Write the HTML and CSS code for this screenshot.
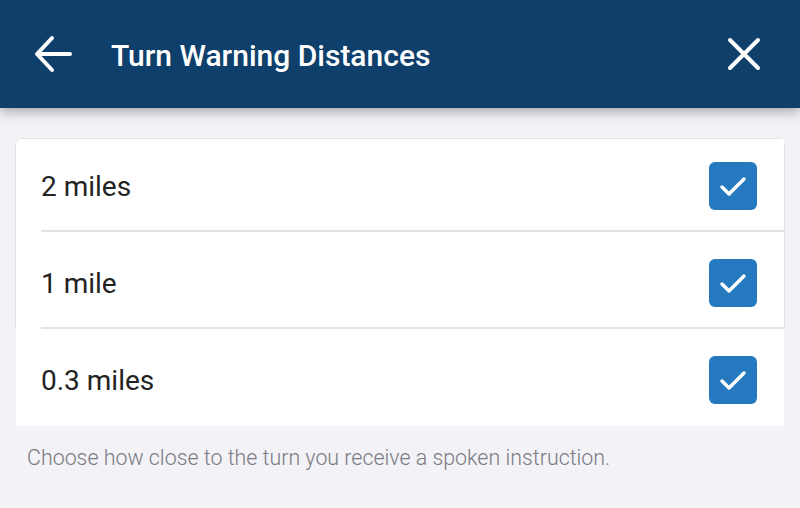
FILE: index.html
```html
<!DOCTYPE html>
<html>
<head>
<meta charset="utf-8">
<link rel="stylesheet" href="styles.css">
</head>
<body>
<header class="topbar">
  <svg class="icon back" width="40" height="40" viewBox="0 0 40 40">
    <path d="M36 20H4M18 4L3 20L18 36" fill="none" stroke="#fff" stroke-width="4" stroke-linecap="round" stroke-linejoin="round"/>
  </svg>
  <h1 class="title">Turn Warning Distances</h1>
  <svg class="icon close" width="40" height="40" viewBox="0 0 40 40">
    <path d="M6 6L34 34M34 6L6 34" fill="none" stroke="#fff" stroke-width="4" stroke-linecap="round"/>
  </svg>
</header>
<main class="content">
  <div class="group">
    <div class="row row-first">
      <span class="label">2 miles</span>
      <span class="check"><svg width="48" height="48" viewBox="0 0 48 48"><path d="M13 25L20 32L35 17" fill="none" stroke="#fff" stroke-width="3.5" stroke-linecap="round" stroke-linejoin="round"/></svg></span>
    </div>
    <div class="row">
      <span class="label">1 mile</span>
      <span class="check"><svg width="48" height="48" viewBox="0 0 48 48"><path d="M13 25L20 32L35 17" fill="none" stroke="#fff" stroke-width="3.5" stroke-linecap="round" stroke-linejoin="round"/></svg></span>
    </div>
  </div>
  <div class="row row-last">
    <span class="label">0.3 miles</span>
    <span class="check"><svg width="48" height="48" viewBox="0 0 48 48"><path d="M13 25L20 32L35 17" fill="none" stroke="#fff" stroke-width="3.5" stroke-linecap="round" stroke-linejoin="round"/></svg></span>
  </div>
  <p class="hint">Choose how close to the turn you receive a spoken instruction.</p>
</main>
</body>
</html>
```
FILE: styles.css
```css
html, body {
  margin: 0;
  padding: 0;
  background: #f2f2f7;
  font-family: Roboto, "Liberation Sans", sans-serif;
  width: 800px;
  height: 508px;
  overflow: hidden;
}
.topbar {
  height: 108px;
  background: #0f406c;
  display: flex;
  align-items: center;
  padding: 0 36px 0 34px;
  box-sizing: border-box;
  box-shadow: 0 3px 12px rgba(0, 0, 0, 0.35);
  position: relative;
  z-index: 1;
}
.icon { display: block; flex: none; }
.title {
  margin: 4px 0 0 37px;
  flex: 1;
  color: #fff;
  font-size: 30px;
  font-weight: 500;
  line-height: 36px;
}
.content {
  padding: 30px 15px 0;
}
.group {
  background: #fff;
  border: 1px solid #e2e2e9;
  border-bottom: none;
  border-radius: 6px 6px 0 0;
}
.row {
  display: flex;
  align-items: center;
  justify-content: space-between;
  margin-left: 25px;
  padding: 27px 27px 20px 0;
  border-bottom: 2px solid #e2e2e9;
  background: #fff;
}
.row-first { padding-top: 23px; }
.row-last {
  margin: 0 1px;
  padding: 27px 27px 22px 25px;
  border-bottom: none;
}
.label {
  font-size: 28px;
  line-height: 34px;
  color: #232323;
  padding-top: 2px;
}
.check {
  width: 48px;
  height: 48px;
  border-radius: 6px;
  background: #2479bf;
  display: block;
}
.check svg { display: block; }
.hint {
  margin: 19px 0 0 12px;
  font-size: 21.4px;
  font-weight: 300;
  color: #7a7a80;
  line-height: 26px;
}
```
